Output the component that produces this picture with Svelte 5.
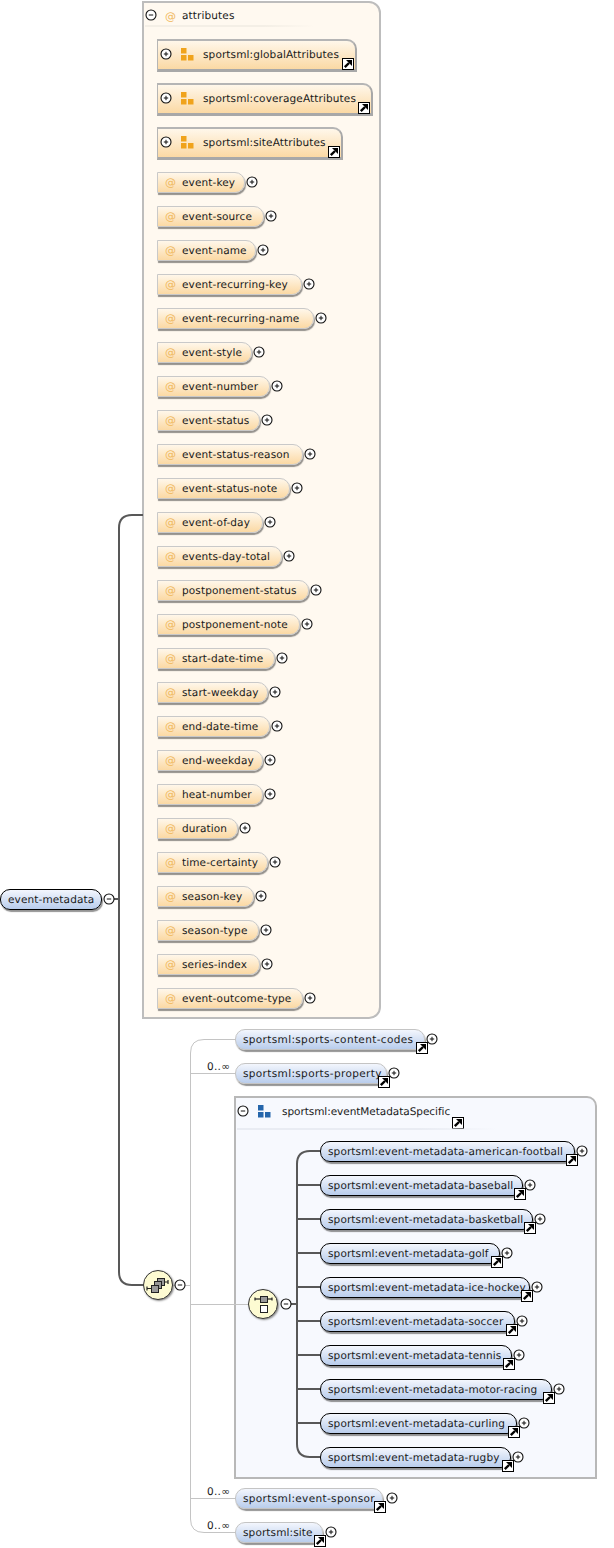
<script>
  const groups = [
    { name: "sportsml:globalAttributes", width: 200 },
    { name: "sportsml:coverageAttributes", width: 216 },
    { name: "sportsml:siteAttributes", width: 186 },
  ];

  const attrs = [
    ["event-key", 88], ["event-source", 107], ["event-name", 99], ["event-recurring-key", 145],
    ["event-recurring-name", 157], ["event-style", 95], ["event-number", 113], ["event-status", 103],
    ["event-status-reason", 146], ["event-status-note", 133], ["event-of-day", 106], ["events-day-total", 125],
    ["postponement-status", 152], ["postponement-note", 143], ["start-date-time", 118], ["start-weekday", 111],
    ["end-date-time", 113], ["end-weekday", 106], ["heat-number", 106], ["duration", 81],
    ["time-certainty", 111], ["season-key", 97], ["season-type", 102], ["series-index", 103],
    ["event-outcome-type", 146],
  ];

  const specifics = [
    ["sportsml:event-metadata-american-football", 255],
    ["sportsml:event-metadata-baseball", 203],
    ["sportsml:event-metadata-basketball", 213],
    ["sportsml:event-metadata-golf", 180],
    ["sportsml:event-metadata-ice-hockey", 210],
    ["sportsml:event-metadata-soccer", 195],
    ["sportsml:event-metadata-tennis", 192],
    ["sportsml:event-metadata-motor-racing", 232],
    ["sportsml:event-metadata-curling", 197],
    ["sportsml:event-metadata-rugby", 191],
  ];

  const rowYs = specifics.map((_, i) => 1151 + i * 34);
</script>

{#snippet toggle(open)}
  <svg class="toggle" width="12" height="12" viewBox="0 0 12 12">
    <circle cx="6" cy="6" r="5" fill="#fff" stroke="#111" stroke-width="1.1" />
    <path d={open ? "M3.8 6h4.4" : "M3.8 6h4.4M6 3.8v4.4"} stroke="#111" stroke-width="1" />
  </svg>
{/snippet}

{#snippet link()}
  <svg class="link" width="12" height="12" viewBox="0 0 12 12">
    <rect x="0.5" y="0.5" width="11" height="11" fill="#fff" stroke="#000" />
    <path d="M2.8 9.2 L7 5" stroke="#000" stroke-width="2.4" />
    <path d="M4 2h6v6z" fill="#000" />
  </svg>
{/snippet}

{#snippet squares(color)}
  <svg class="squares" width="13" height="13" viewBox="0 0 13 13">
    <rect x="0" y="0" width="5.5" height="5.5" fill={color} />
    <rect x="0" y="7" width="5.5" height="5.5" fill={color} />
    <rect x="7" y="7" width="5.5" height="5.5" fill={color} />
  </svg>
{/snippet}

<div class="canvas">
  <section class="attributes">
    <header class="attr-head">
      {@render toggle(true)}
      <span class="at">@</span>
      <span class="head-name">attributes</span>
    </header>
    <div class="attr-list">
      {#each groups as g}
        <div class="group" style="width: {g.width}px">
          {@render toggle(false)}
          {@render squares("#f0a31c")}
          <span class="group-name">{g.name}</span>
          {@render link()}
        </div>
      {/each}
      {#each attrs as [name, width]}
        <div class="attr-row">
          <div class="attr" style="width: {width}px">
            <span class="at">@</span>
            <span>{name}</span>
          </div>
          {@render toggle(false)}
        </div>
      {/each}
    </div>
  </section>

  <section class="specific">
    <header class="spec-head">
      {@render toggle(true)}
      {@render squares("#2566ab")}
      <span class="spec-name">sportsml:eventMetadataSpecific</span>
      {@render link()}
    </header>
    <div class="spec-list">
      {#each specifics as [name, width]}
        <div class="el-row">
          <div class="el required" style="width: {width}px">{name}{@render link()}</div>
          {@render toggle(false)}
        </div>
      {/each}
    </div>
  </section>

  <svg class="wires" width="614" height="1548">
    <g fill="none" stroke="#c4c4c4" stroke-width="1">
      <path d="M235.5 1039.5H204Q190.5 1039.5 190.5 1053V1519Q190.5 1532.5 204 1532.5H235" />
      <path d="M190 1073.5H235M190 1304.5H250M190 1498.5H235M172 1285.5H190" />
    </g>
    <g fill="none" stroke="#585858" stroke-width="2">
      <path d="M143 515H132Q119 515 119 528V1272Q119 1285 132 1285H144" />
      <path d="M114 899H119" />
      <path d="M320 1151H310Q297 1151 297 1164V1444Q297 1457 310 1457H320" />
      <path d="M291 1304H297" />
      {#each rowYs.slice(1, -1) as y}
        <path d="M297 {y}H320" />
      {/each}
    </g>
  </svg>

  <div class="el required root">event-metadata</div>
  <div class="tog root-tog">{@render toggle(true)}</div>

  <div class="compositor seq-many">
    <svg width="30" height="30" viewBox="0 0 30 30">
      <path d="M4 18.5h6M21 12h4" stroke="#222" stroke-width="1.2" />
      <path d="M4 16.5v4M25 10v4" stroke="#222" stroke-width="1.2" />
      <rect x="14.5" y="8.5" width="7" height="7" fill="#999" stroke="#222" />
      <rect x="11.5" y="11.5" width="7" height="7" fill="#999" stroke="#222" />
      <rect x="8.5" y="15.5" width="7" height="7" fill="#999" stroke="#222" />
    </svg>
  </div>
  <div class="tog seq-tog">{@render toggle(true)}</div>

  <div class="compositor choice">
    <svg width="30" height="30" viewBox="0 0 30 30">
      <path d="M7 10h17" stroke="#222" stroke-width="1.2" />
      <path d="M7 8.5v3M24 8.5v3" stroke="#222" stroke-width="1.2" />
      <rect x="12.5" y="7.5" width="7" height="6" fill="#999" stroke="#222" />
      <rect x="12.5" y="16.5" width="7" height="7" fill="#fff" stroke="#222" />
    </svg>
  </div>
  <div class="tog choice-tog">{@render toggle(true)}</div>

  <span class="occurs o1">0..∞</span>
  <span class="occurs o2">0..∞</span>
  <span class="occurs o3">0..∞</span>

  <div class="el-row at-codes">
    <div class="el wide" style="width: 190px">sportsml:sports-content-codes{@render link()}</div>
    {@render toggle(false)}
  </div>
  <div class="el-row at-property">
    <div class="el wide" style="width: 152px">sportsml:sports-property{@render link()}</div>
    {@render toggle(false)}
  </div>
  <div class="el-row at-sponsor">
    <div class="el wide" style="width: 148px">sportsml:event-sponsor{@render link()}</div>
    {@render toggle(false)}
  </div>
  <div class="el-row at-site">
    <div class="el" style="width: 88px">sportsml:site{@render link()}</div>
    {@render toggle(false)}
  </div>
</div>

<style>
  :global(body) {
    margin: 0;
    background: #fff;
  }

  .canvas {
    position: relative;
    width: 614px;
    height: 1548px;
    overflow: hidden;
    font-family: "DejaVu Sans", sans-serif;
    font-size: 10.5px;
    letter-spacing: 0.12px;
    text-rendering: geometricPrecision;
    color: #1a1a1a;
  }

  svg {
    display: block;
    flex: none;
  }

  .wires {
    position: absolute;
    left: 0;
    top: 0;
    pointer-events: none;
  }

  .at {
    color: #f0b85c;
    font-size: 11px;
    letter-spacing: 0;
  }

  /* attribute group box */
  .attributes {
    position: absolute;
    left: 142px;
    top: 1px;
    width: 239px;
    height: 1018px;
    box-sizing: border-box;
    border: 2px solid #bdbdbd;
    border-radius: 0 12px 12px 0;
    background: #fff9f0;
  }

  .attr-head {
    display: flex;
    align-items: center;
    height: 24px;
    padding-left: 1px;
    position: relative;
  }

  .attr-head .at {
    margin: 2px 6px 0 8px;
  }

  .head-name {
    margin-top: 2px;
  }

  .attr-head::after,
  .spec-head::after {
    content: "";
    position: absolute;
    left: 1px;
    bottom: 0;
    width: 170px;
    height: 2px;
    background: linear-gradient(to right, #f4efe6, #f4efe6 70%, transparent);
  }

  .attr-list {
    display: flex;
    flex-direction: column;
    align-items: flex-start;
    padding: 12px 0 0 13px;
    gap: 10px;
  }

  .group {
    position: relative;
    display: flex;
    align-items: center;
    height: 33px;
    box-sizing: border-box;
    margin-bottom: 1px;
    padding: 0 0 2px 2px;
    border: 2px solid #b5b5b5;
    border-left-width: 1px;
    border-right-color: #a8a8a8;
    border-bottom: 3px solid #a8a8a8;
    border-radius: 0 10px 0 0;
    background: linear-gradient(#fff7ea, #fbd9a4);
  }

  .group:nth-child(3) {
    margin-bottom: 0;
  }

  .group .squares {
    margin: 1px 0 0 9px;
  }

  .group-name {
    margin: 1px 0 0 9px;
  }

  .group .link {
    position: absolute;
    right: 1px;
    bottom: -1px;
  }

  .attr-row {
    display: flex;
    align-items: center;
    gap: 1px;
    height: 24px;
  }

  .attr {
    display: flex;
    align-items: center;
    gap: 6px;
    box-sizing: border-box;
    height: 21px;
    margin-top: 1px;
    padding-left: 7px;
    border: 1px solid #c9c9c9;
    border-radius: 0 10px 10px 0;
    box-shadow: 1px 2px 1px rgba(60, 60, 60, 0.55);
    background: linear-gradient(#fff7ea, #fbd9a4);
  }

  /* element pills */
  .el-row {
    display: flex;
    align-items: center;
    gap: 1px;
    height: 24px;
  }

  .el {
    position: relative;
    box-sizing: border-box;
    height: 21px;
    margin-top: 1px;
    padding: 3px 0 0 7px;
    line-height: 15px;
    white-space: nowrap;
    border: 1px solid #c4c4c4;
    border-radius: 10px;
    box-shadow: 1px 2px 1px rgba(60, 60, 60, 0.55);
    background: linear-gradient(#f3f6fd, #b9cdec);
  }

  .el.required {
    border-color: #000;
  }

  .el.wide {
    letter-spacing: 0.35px;
  }

  .el .link {
    position: absolute;
    right: -4px;
    bottom: -5px;
  }

  .root {
    position: absolute;
    left: 0;
    top: 888px;
    width: 102px;
  }

  .tog {
    position: absolute;
  }

  .root-tog { left: 103px; top: 893px; }
  .seq-tog { left: 174px; top: 1279px; }
  .choice-tog { left: 280px; top: 1298px; }

  .compositor {
    position: absolute;
    width: 30px;
    height: 30px;
    box-sizing: border-box;
    border-radius: 50%;
    display: flex;
    align-items: center;
    justify-content: center;
    background: #fdfbd2;
    border: 1.5px solid #333;
    box-shadow: 1px 1px 2px #8a8a8a;
  }

  .seq-many { left: 143px; top: 1270px; }
  .choice { left: 248px; top: 1289px; }

  .occurs {
    position: absolute;
    left: 207px;
    line-height: 14px;
    font-size: 10.5px;
    letter-spacing: 0.3px;
  }

  .o1 { top: 1060px; }
  .o2 { top: 1485px; }
  .o3 { top: 1519px; }

  .at-codes { position: absolute; left: 235px; top: 1027px; }
  .at-property { position: absolute; left: 235px; top: 1061px; }
  .at-sponsor { position: absolute; left: 235px; top: 1486px; }
  .at-site { position: absolute; left: 235px; top: 1520px; }

  .at-sponsor .toggle { margin-left: 2px; }
  .at-site .toggle { margin-left: 1px; }

  /* eventMetadataSpecific box */
  .specific {
    position: absolute;
    left: 234px;
    top: 1096px;
    width: 363px;
    height: 383px;
    box-sizing: border-box;
    border: 2px solid #b8b8b8;
    border-radius: 0 10px 0 0;
    background: #f7f9fe;
  }

  .spec-head {
    position: relative;
    display: flex;
    align-items: center;
    box-sizing: border-box;
    height: 32px;
    padding: 0 0 6px 1px;
  }

  .spec-head::after {
    width: 260px;
    background: linear-gradient(to right, #e9ecf3, #e9ecf3 70%, transparent);
  }

  .spec-head .squares {
    margin-left: 9px;
  }

  .spec-name {
    margin: 2px 0 0 11px;
    letter-spacing: -0.05px;
  }

  .spec-head .link {
    margin-top: 23px;
    margin-left: 2px;
  }

  .spec-list {
    display: flex;
    flex-direction: column;
    align-items: flex-start;
    gap: 10px;
    padding: 9px 0 0 84px;
  }
</style>
